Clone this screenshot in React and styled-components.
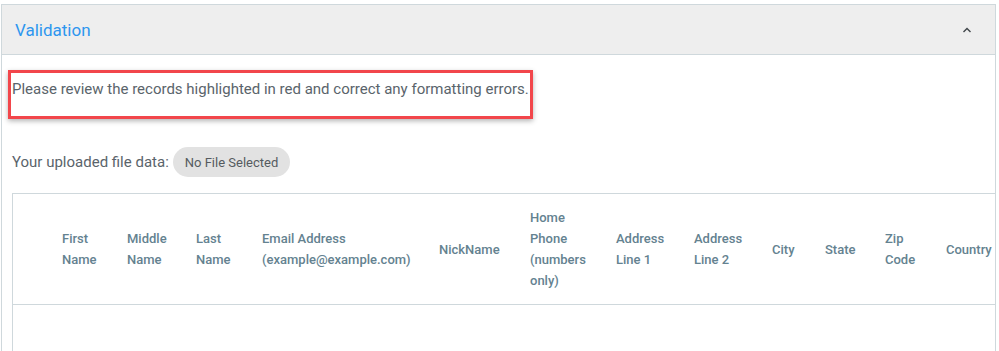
import React from 'react'
import styled, { createGlobalStyle } from 'styled-components'

const GlobalStyle = createGlobalStyle`
    html, body {
        margin: 0;
        padding: 0;
        background: #ffffff;
        font-family: Roboto, "Liberation Sans", Arial, sans-serif;
        overflow: hidden;
    }
`

const StyledPage = styled.div`
    padding: 4px 3px 0 1px;
    height: 351px;
    box-sizing: border-box;
`

const StyledPanel = styled.section`
    border: 1px solid #cfd8dc;
    border-bottom: none;
    height: 100%;
    box-sizing: border-box;
    display: flex;
    flex-direction: column;
`

const StyledHeader = styled.header`
    display: flex;
    align-items: center;
    justify-content: space-between;
    height: 49px;
    padding: 0 23px 0 13px;
    background: #eeeeee;
    border-bottom: 1px solid #cfd8dc;
    flex-shrink: 0;
`

const StyledTitle = styled.h2`
    margin: 0;
    font-size: 17px;
    font-weight: 400;
    color: #2d96ef;
`

const StyledBody = styled.div`
    flex: 1;
    display: flex;
    flex-direction: column;
    padding: 15px 0 0 10px;
    min-height: 0;
`

const StyledNotice = styled.div`
    align-self: flex-start;
    margin-left: -4px;
    padding: 7px 1px 18px 1px;
    border: 3px solid #f2464b;
    box-shadow: 0 2px 5px rgba(0, 0, 0, 0.3);
    font-size: 15px;
    line-height: 18px;
    color: #5a646b;
`

const StyledFileRow = styled.div`
    display: flex;
    align-items: center;
    gap: 4px;
    margin-top: 28px;
    font-size: 15px;
    color: #5a646b;
`

const StyledChip = styled.span`
    display: inline-flex;
    align-items: center;
    height: 30px;
    padding: 0 12px;
    border-radius: 15px;
    background: #e2e2e2;
    font-size: 13px;
    color: #555b60;
`

const StyledTableWrap = styled.div`
    flex: 1;
    margin-top: 16px;
    border-left: 1px solid #cfd8dc;
    border-top: 1px solid #cfd8dc;
    overflow: hidden;
`

const StyledTable = styled.table`
    border-collapse: collapse;
    table-layout: fixed;
    width: 1040px;
`

const StyledHeadCell = styled.th`
    width: ${p => p.$w}px;
    padding: 13px 20px 13px 0;
    box-sizing: border-box;
    text-align: left;
    vertical-align: middle;
    font-size: 13px;
    font-weight: 500;
    line-height: 21px;
    color: #648290;
    border-bottom: 1px solid #cfd8dc;
`

const columns = [
    { label: '', w: 49 },
    { label: 'First Name', w: 65 },
    { label: 'Middle Name', w: 69 },
    { label: 'Last Name', w: 66 },
    { label: 'Email Address (example@example.com)', w: 177 },
    { label: 'NickName', w: 91 },
    { label: 'Home Phone (numbers only)', w: 86 },
    { label: 'Address Line 1', w: 78 },
    { label: 'Address Line 2', w: 78 },
    { label: 'City', w: 53 },
    { label: 'State', w: 60 },
    { label: 'Zip Code', w: 61 },
    { label: 'Country', w: 107 },
]

const ChevronUp = () =>
    <svg width="10" height="6" viewBox="0 0 10 6">
        <polyline points="1.5,5 5,1.5 8.5,5" fill="none" stroke="#3f4549" strokeWidth="1.4"/>
    </svg>

const App = () =>
    <StyledPage>
        <GlobalStyle/>
        <StyledPanel>
            <StyledHeader>
                <StyledTitle>Validation</StyledTitle>
                <ChevronUp/>
            </StyledHeader>
            <StyledBody>
                <StyledNotice>
                    Please review the records highlighted in red and correct any formatting errors.
                </StyledNotice>
                <StyledFileRow>
                    Your uploaded file data:
                    <StyledChip>No File Selected</StyledChip>
                </StyledFileRow>
                <StyledTableWrap>
                    <StyledTable>
                        <thead>
                            <tr>
                                {columns.map((c, i) =>
                                    <StyledHeadCell key={i} $w={c.w}>{c.label}</StyledHeadCell>
                                )}
                            </tr>
                        </thead>
                    </StyledTable>
                </StyledTableWrap>
            </StyledBody>
        </StyledPanel>
    </StyledPage>

export default App
